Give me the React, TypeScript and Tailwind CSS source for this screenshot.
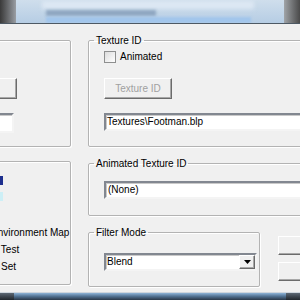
const font = "font-['Liberation_Sans',Arial,sans-serif]";
const sunken = "bg-white border-2 border-t-[#828790] border-l-[#828790] border-b-[#f4f4f4] border-r-[#f4f4f4] shadow-[inset_1px_1px_0_#c9c9c9]";
const raised = "bg-[#f0f0f0] border border-t-white border-l-white border-b-[#6b6b6b] border-r-[#6b6b6b] shadow-[inset_-1px_-1px_0_#a8a8a8]";
const group = "border border-[#b3b3b3] rounded-[2px] shadow-[1px_1px_0_#ffffff,inset_1px_1px_0_#ffffff]";
const legend = "ml-[5px] px-[2px] leading-[13px] text-[10px] text-black";

function TitleBar() {
  return (
    <div className="h-[24px] flex border-b border-[#4d5964] shrink-0">
      <div className="w-[16px] bg-gradient-to-r from-[#3a3a3a] to-[#9a9ea4]" />
      <div className="flex-1 relative bg-gradient-to-b from-[#cfdeec] to-[#b6cde4] overflow-hidden">
        <div className="mt-[1px] ml-[26px] w-[212px] h-[8px] bg-[#dde8f3] blur-[2px]" />
        <div className="mt-[1px] ml-[30px] w-[110px] h-[6px] bg-[#8ea6c0] blur-[1.5px]" />
        <div className="mt-[1px] ml-[30px] w-[205px] h-[6px] bg-[#a2c6ec] blur-[1px]" />
      </div>
      <div className="w-[16px] bg-gradient-to-r from-[#a0a4a8] to-[#4a4a4a]" />
    </div>
  );
}

function BottomBar() {
  return (
    <div className="h-[8px] flex border-t border-[#cfd6dd] shrink-0">
      <div className="w-[14px] bg-gradient-to-b from-[#5d6874] to-[#20262c]" />
      <div className="flex-1 bg-gradient-to-b from-[#8eb4d8] via-[#4f6f8f] to-[#2a3848]" />
      <div className="w-[14px] bg-gradient-to-b from-[#5d6874] to-[#20262c]" />
    </div>
  );
}

export default function App() {
  return (
    <div className={`w-[300px] h-[300px] overflow-hidden flex flex-col bg-[#f0f0f0] ${font} text-[10px] text-black`}>
      <TitleBar />
      <div className="flex-1 flex">
        {/* left column, cut off at the window edge */}
        <div className="w-[71px] shrink-0 flex flex-col">
          <fieldset className={`${group} -ml-[20px] w-[91px] mt-[16px] h-[107px] pl-[9px] pt-[37px] flex flex-col`}>
            <div className={`${raised} w-[27px] h-[21px]`} />
            <div className={`${sunken} mt-[14px] w-[24px] h-[20px]`} />
          </fieldset>
          <fieldset className={`${group} -ml-[20px] w-[91px] mt-[14px] h-[124px] pt-[14px] flex flex-col`}>
            <div className="ml-[19px] w-[3px] h-[9px] bg-[#1d2f8e]" />
            <div className="ml-[19px] mt-[7px] w-[3px] h-[9px] bg-[#cdeff6]" />
            <div className="-ml-[25px] mt-[25px] flex flex-col gap-[4px] leading-[13px] whitespace-nowrap">
              <span>Sphere Environment Map</span>
              <span>No Depth Test</span>
              <span>No Depth Set</span>
            </div>
          </fieldset>
        </div>

        {/* right column */}
        <div className="ml-[17px] w-[230px] shrink-0 flex flex-col">
          <fieldset className={`${group} mt-[10px] h-[113px]`}>
            <legend className={legend}>Texture ID</legend>
            <div className="pl-[15px] flex flex-col">
              <label className="mt-[4px] h-[12px] flex items-center gap-[4px] leading-[12px]">
                <span className="w-[12px] h-[12px] border border-[#8e8f8f] bg-gradient-to-br from-[#dcdcdc] to-white" />
                <span>Animated</span>
              </label>
              <div className={`${raised} mt-[15px] w-[68px] h-[21px] flex items-center justify-center text-[#a0a0a0]`}>Texture ID</div>
              <div className={`${sunken} mt-[14px] h-[18px] flex items-center pl-[1px] leading-none`}>Textures\Footman.blp</div>
            </div>
          </fieldset>

          <fieldset className={`${group} mt-[10px] h-[59px]`}>
            <legend className={legend}>Animated Texture ID</legend>
            <div className="pl-[15px] flex flex-col">
              <div className={`${sunken} mt-[11px] h-[18px] flex items-center pl-[2px] leading-none`}>(None)</div>
            </div>
          </fieldset>

          <div className="mt-[10px] flex">
            <fieldset className={`${group} w-[186px] h-[61px]`}>
              <legend className={legend}>Filter Mode</legend>
              <div className="pl-[15px] flex flex-col">
                <div className={`${sunken} mt-[14px] w-[153px] h-[18px] flex items-center leading-none`}>
                  <span className="flex-1 pl-[1px]">Blend</span>
                  <span className={`${raised} w-[16px] h-full flex items-center justify-center`}>
                    <svg width="7" height="4" viewBox="0 0 7 4"><path d="M0 0h7L3.5 4z" fill="#000" /></svg>
                  </span>
                </div>
              </div>
            </fieldset>
            <div className="ml-[18px] mt-[10px] flex flex-col gap-[7px]">
              <div className={`${raised} w-[40px] h-[19px]`} />
              <div className={`${raised} w-[40px] h-[19px]`} />
            </div>
          </div>
        </div>
      </div>
      <BottomBar />
    </div>
  );
}
